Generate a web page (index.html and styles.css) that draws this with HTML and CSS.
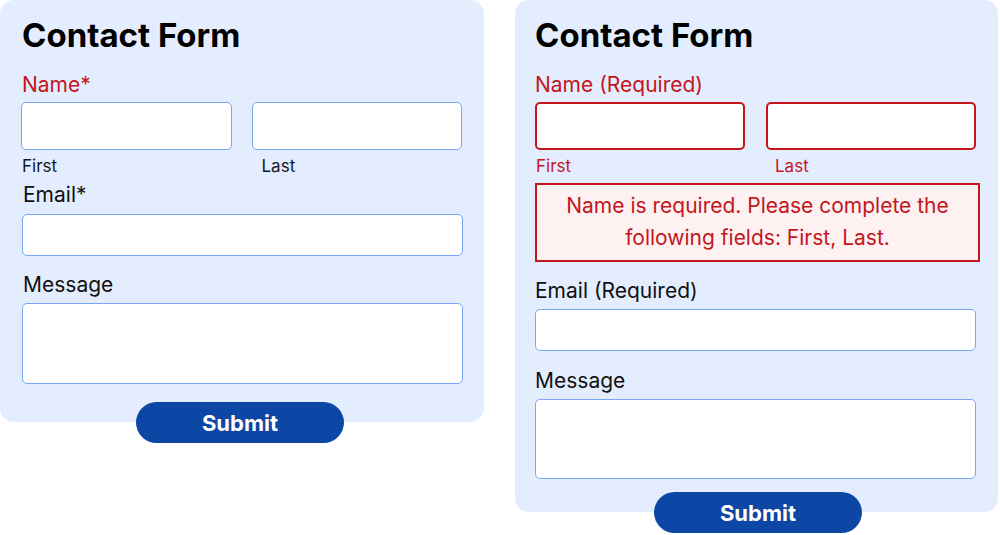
FILE: index.html
```html
<!DOCTYPE html>
<html lang="en">
<head>
    <meta charset="UTF-8">
    <meta name="viewport" content="width=device-width, initial-scale=1.0">
    <title>Contact Form</title>
    <link rel="stylesheet" href="styles.css">
</head>
<body>
    <div class="page">
        <!-- Default state -->
        <form class="form form-left">
            <div class="card">
                <h1 class="title">Contact Form</h1>
                <label class="label label-error name-label">Name*</label>
                <div class="name-row">
                    <div class="name-col">
                        <input class="input input-name" type="text">
                        <span class="hint">First</span>
                    </div>
                    <div class="name-col">
                        <input class="input input-name" type="text">
                        <span class="hint hint-last">Last</span>
                    </div>
                </div>
                <label class="label email-label">Email*</label>
                <input class="input input-email" type="email">
                <label class="label message-label">Message</label>
                <textarea class="input textarea"></textarea>
            </div>
            <button class="submit" type="button">Submit</button>
        </form>

        <!-- Error state -->
        <form class="form form-right">
            <div class="card">
                <h1 class="title">Contact Form</h1>
                <label class="label label-error name-label">Name (Required)</label>
                <div class="name-row">
                    <div class="name-col">
                        <input class="input input-name input-invalid" type="text">
                        <span class="hint hint-error">First</span>
                    </div>
                    <div class="name-col">
                        <input class="input input-name input-invalid" type="text">
                        <span class="hint hint-error hint-last">Last</span>
                    </div>
                </div>
                <div class="error-box">Name is required. Please complete the following fields: First, Last.</div>
                <label class="label email-label">Email (Required)</label>
                <input class="input input-email" type="email">
                <label class="label message-label">Message</label>
                <textarea class="input textarea"></textarea>
            </div>
            <button class="submit" type="button">Submit</button>
        </form>
    </div>
</body>
</html>
```

FILE: styles.css
```css
/* General */
body {
    margin: 0;
    font-family: 'Inter', 'Liberation Sans', sans-serif;
    background: #ffffff;
    color: #111111;
}

.page {
    display: flex;
    align-items: flex-start;
    gap: 31px;
}

/* Form + card */
.form {
    margin: 0;
    display: flex;
    flex-direction: column;
    align-items: center;
}

.card {
    box-sizing: border-box;
    width: 484px;
    background: #e3edfd;
    border-radius: 14px;
    padding: 15px 21px 38px 22px;
    display: flex;
    flex-direction: column;
    align-items: flex-start;
}

.form-right .card {
    width: 483px;
    padding: 15px 22px 33px 20px;
}

.title {
    margin: 0;
    font-size: 33px;
    line-height: 40px;
    font-weight: 700;
    color: #000000;
}

/* Labels */
.label {
    display: block;
    font-size: 21px;
    line-height: 24px;
    color: #111111;
}

.label-error {
    color: #c4161c;
}

.name-label {
    margin-top: 18px;
}

.email-label {
    margin-top: 7px;
    padding-left: 1px;
}

.form-right .email-label {
    margin-top: 17px;
    padding-left: 0;
}

.message-label {
    margin-top: 17px;
    padding-left: 1px;
}

.form-right .message-label {
    margin-top: 18px;
    padding-left: 0;
}

/* Inputs */
.input {
    box-sizing: border-box;
    display: block;
    background: #ffffff;
    border: 1px solid #78a6f6;
    border-radius: 5px;
    font-family: inherit;
    margin: 6px 0 0;
}

.name-row {
    display: flex;
    gap: 20px;
    width: 441px;
    margin-left: -1px;
    margin-top: 5px;
}

.form-right .name-row {
    gap: 21px;
    margin-left: 0;
}

.name-col {
    flex: 1;
    display: flex;
    flex-direction: column;
}

.input-name {
    width: 100%;
    height: 48px;
    margin: 0;
}

.input-invalid {
    border: 2px solid #c4161c;
}

.hint {
    margin-top: 6px;
    font-size: 17px;
    line-height: 20px;
    color: #111827;
    padding-left: 1px;
}

.hint-last {
    padding-left: 10px;
}

.hint-error {
    color: #c4161c;
}

.hint-error.hint-last {
    padding-left: 9px;
}

.input-email {
    width: 441px;
    height: 42px;
    margin-top: 7px;
}

.form-right .input-email {
    margin-top: 6px;
}

.textarea {
    width: 441px;
    height: 81px;
    resize: none;
}

.form-right .textarea {
    height: 80px;
    margin-top: 6px;
}

/* Error message */
.error-box {
    box-sizing: border-box;
    width: 445px;
    margin: 7px -4px 0 0;
    padding: 5px 10px 6px;
    border: 2px solid #c4161c;
    background: #fdf1f2;
    color: #c4161c;
    font-size: 21px;
    line-height: 32px;
    text-align: center;
}

/* Submit */
.submit {
    width: 208px;
    height: 41px;
    margin: -20px 0 0 -4px;
    border: none;
    border-radius: 21px;
    background: #0d47a6;
    color: #ffffff;
    font-family: inherit;
    font-size: 22px;
    font-weight: 700;
}

.form-right .submit {
    margin-left: 3px;
}
```
